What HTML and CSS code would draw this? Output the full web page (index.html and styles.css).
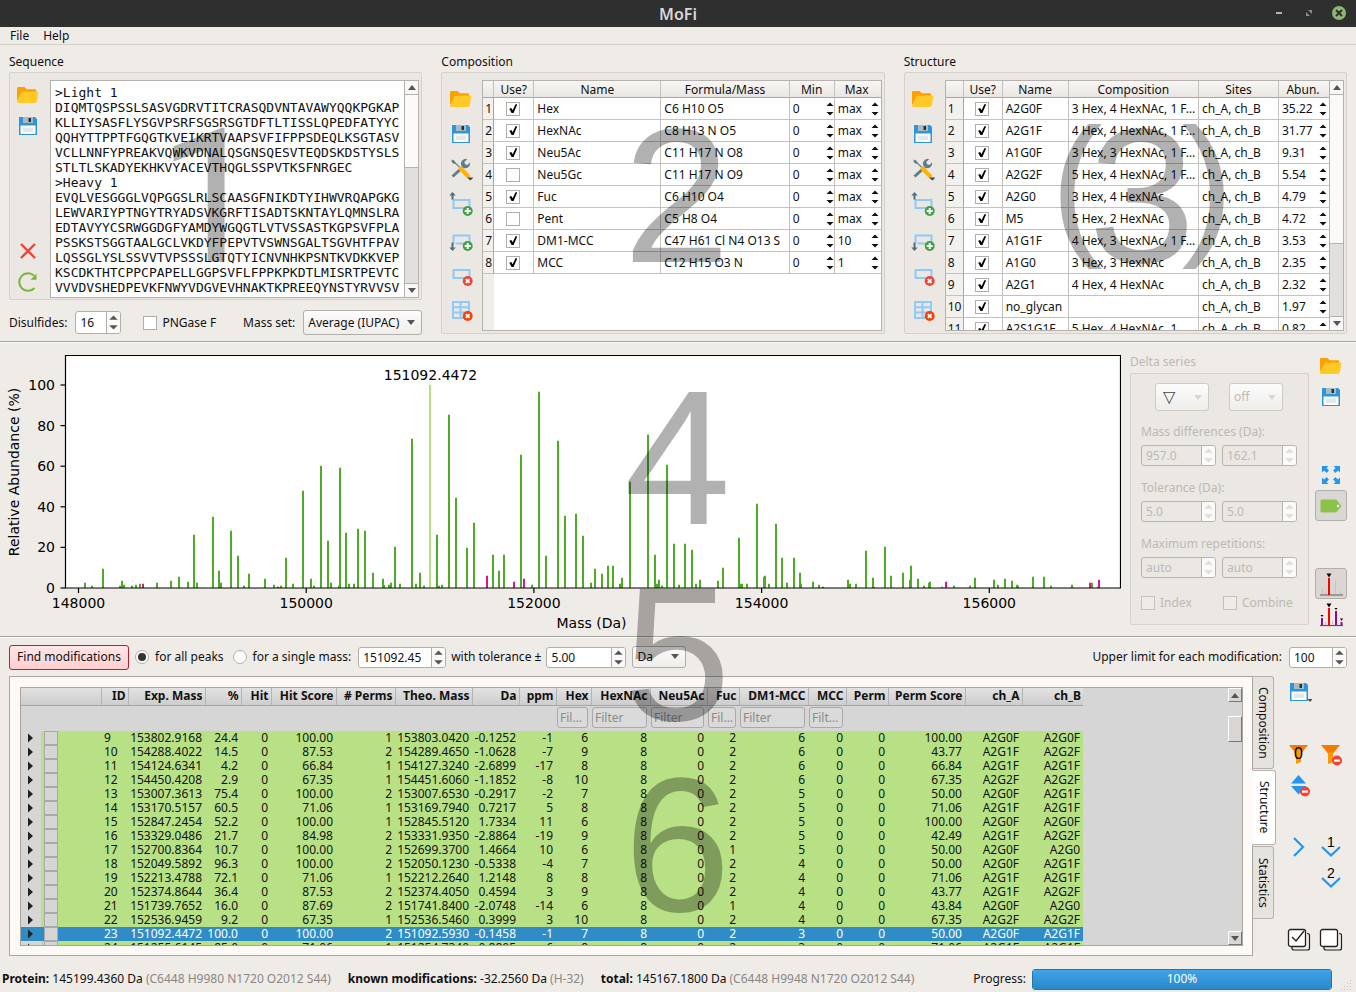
FILE: index.html
```html
<!DOCTYPE html>
<html lang="en">
<head>
<meta charset="utf-8">
<title>MoFi</title>
<link rel="stylesheet" href="styles.css">
</head>
<body>
<svg class="sprite" aria-hidden="true">
  <symbol id="i-folder" viewBox="0 0 24 24">
    <path fill="#ffa000" d="M1 5.2Q1 4 2.200 4H8.500l2.200 2.200H19q1.200 0 1.200 1.200V17H1z"/>
    <path fill="#ffca28" d="M6.500 8.800H21.300q1.300 0 1 1.200l-1.500 8.600q-.3 1.400-1.600 1.400H2.400Q.8 20 1 18.400L5 9.800q.4-1 1.500-1z"/>
  </symbol>
  <symbol id="i-save" viewBox="0 0 24 24">
    <path fill="#2e95dc" d="M3 3h16l2 2v16H3z"/>
    <path fill="#a9bac3" d="M7 3h10v6H7z"/><path fill="#263238" d="M12.500 4h2.500v4h-2.500z"/>
    <path fill="#fff" d="M4.500 11.500h15v8.500h-15z"/><path fill="#e3e8ea" d="M7 13.500h10v4.500H7z"/>
  </symbol>
  <symbol id="i-tools" viewBox="0 0 24 24">
    <path stroke="#607d8b" stroke-width="3" d="M3.500 19.500l10-9"/>
    <path fill="#607d8b" d="M12 8q-.6-4 2.600-5.600 2-1 3.600-.2l-2.800 2.600.6 2.400 2.600.7L21 5.200q.6 2.800-1.400 4.700-2.300 2-5.200 1.200z"/>
    <path stroke="#78909c" stroke-width="1.600" d="M3.500 3.500L13 12.500"/><path fill="#607d8b" d="M2.400 2.500l3 1.200 1.200 2.200-1.400 1.200L3 5.600z"/>
    <path stroke="#ffb300" stroke-width="4" stroke-linecap="round" d="M11.500 11.500l7.500 7.500"/>
    <path fill="#444" d="M18 20.500h6.500l-3.200 3z"/>
  </symbol>
  <symbol id="i-rowabove" viewBox="0 0 24 24">
    <path fill="none" stroke="#90caf9" stroke-width="2" d="M4.500 8h16v8h-16z"/>
    <path fill="#546e7a" d="M3.500 0l3.200 3.600H4.500v3.900h-2V3.600H.3z"/>
    <circle cx="18.700" cy="19" r="5" fill="#43a047"/><path stroke="#fff" stroke-width="2" d="M18.700 16v6M15.700 19h6"/>
  </symbol>
  <symbol id="i-rowbelow" viewBox="0 0 24 24">
    <path fill="none" stroke="#90caf9" stroke-width="2" d="M4.500 15.500v-8h16v8h-14"/>
    <path fill="#546e7a" d="M3.500 23l3.200-3.600H4.500v-4.900h-2v4.900H.3z"/>
    <circle cx="18.700" cy="18" r="5" fill="#43a047"/><path stroke="#fff" stroke-width="2" d="M18.700 15v6M15.700 18h6"/>
  </symbol>
  <symbol id="i-rowdel" viewBox="0 0 24 24">
    <path fill="none" stroke="#90caf9" stroke-width="2" d="M4.500 7h16v8h-16z"/>
    <circle cx="18.700" cy="18" r="5" fill="#f44336"/><path stroke="#fff" stroke-width="1.800" d="M16.800 16.100l3.800 3.800M20.600 16.100l-3.800 3.800"/>
  </symbol>
  <symbol id="i-cleartable" viewBox="0 0 24 24">
    <path fill="none" stroke="#90caf9" stroke-width="2" d="M4 4h16v16H4zM4 9.300h16M4 14.600h16M11.500 4v16"/>
    <circle cx="18.700" cy="18" r="5" fill="#ff3d00"/><path stroke="#fff" stroke-width="1.800" d="M16.800 16.100l3.800 3.800M20.600 16.100l-3.800 3.800"/>
  </symbol>
  <symbol id="i-cross" viewBox="0 0 24 24"><path stroke="#f44336" stroke-width="2.400" d="M5 4l14 14M19 4L5 18"/></symbol>
  <symbol id="i-redo" viewBox="0 0 24 24">
    <path fill="none" stroke="#7cb342" stroke-width="2" d="M18.500 17A8.800 8.800 0 1 1 18 4.600"/><path fill="#7cb342" d="M20.500 2.500v6.300h-6z"/>
  </symbol>
  <symbol id="i-expand" viewBox="0 0 24 24">
    <path fill="#2196f3" d="M3 3h6.500L7.400 5.100l2.500 2.500-2.300 2.300-2.500-2.500L3 9.500zM21 3v6.500l-2.100-2.100-2.500 2.500-2.300-2.300 2.500-2.500L14.500 3zM3 21v-6.500l2.100 2.100 2.500-2.500 2.300 2.300-2.500 2.500L9.500 21zM21 21h-6.500l2.100-2.100-2.500-2.500 2.300-2.300 2.500 2.500 2.100-2.100z"/>
  </symbol>
  <symbol id="i-tag" viewBox="0 0 24 24">
    <path fill="#8bc34a" d="M2.500 5.500H16q1.200 0 2 1l4.500 5.500-4.500 5.500q-.8 1-2 1H2.500q-1 0-1-1v-11q0-1 1-1z"/><circle cx="19" cy="12" r="1.200" fill="#fff"/>
  </symbol>
  <symbol id="i-peak" viewBox="0 0 24 24">
    <path stroke="#c8c4c4" stroke-width="1" d="M3.500 16v6M6.500 19v3M16.500 8v14M21.500 19v3"/><path stroke="#777" stroke-width="1.300" d="M1 23h23"/>
    <path stroke="#f00" stroke-width="2" d="M10 6v17"/><path d="M7.500 1.500h5L10 5.500z"/>
  </symbol>
  <symbol id="i-peaks" viewBox="0 0 24 24">
    <path stroke="#c8c4c4" stroke-width="1" d="M6.500 19v3M13.500 18v3"/><path stroke="#555" stroke-width="1.200" d="M1 22.500h23"/>
    <path stroke="#f00" stroke-width="2" d="M10 5v17"/><path stroke="#8e0d8e" stroke-width="2" d="M3 15v7M17 8v14M22.500 19v3"/>
    <path d="M7.500 .5h5L10 4.500zM1.500 12h3L3 14zM15.500 5h3L17 7zM21 15.500h3L22.500 18z"/>
  </symbol>
  <symbol id="i-funnel0" viewBox="0 0 24 24">
    <path fill="#f57c00" d="M2 3h19l-7 8.500H9z"/><path fill="#ff9800" d="M6 8h11l-3 4v8l-5 2v-10z"/>
    <text x="11.500" y="17" text-anchor="middle" font-family="Liberation Sans, sans-serif" font-size="16">0</text>
  </symbol>
  <symbol id="i-funnelx" viewBox="0 0 24 24">
    <path fill="#f57c00" d="M2 3h19l-7 8.500H9z"/><path fill="#ff9800" d="M9 10.500h5V20l-5 2z"/>
    <circle cx="18" cy="18.500" r="5" fill="#f44336"/><path fill="#fff" d="M15 17.500h6v2.200h-6z"/>
  </symbol>
  <symbol id="i-sortx" viewBox="0 0 24 24">
    <path fill="#2196f3" d="M11.500 2l7.500 8.500H4zM4 13h15l-7.500 8.500z"/>
    <circle cx="18" cy="18.500" r="5" fill="#f44336"/><path fill="#fff" d="M15 17.500h6v2.200h-6z"/>
  </symbol>
  <symbol id="i-right" viewBox="0 0 24 24"><path fill="none" stroke="#2196f3" stroke-width="2.200" d="M7 3l9 9-9 9"/></symbol>
  <symbol id="i-down1" viewBox="0 0 24 24">
    <path fill="none" stroke="#2196f3" stroke-width="2.200" d="M3 12l9 8.500 9-8.500"/>
    <text x="12" y="12" text-anchor="middle" font-family="Liberation Sans, sans-serif" font-size="14">1</text>
  </symbol>
  <symbol id="i-down2" viewBox="0 0 24 24">
    <path fill="none" stroke="#2196f3" stroke-width="2.200" d="M3 12l9 8.500 9-8.500"/>
    <text x="12" y="12" text-anchor="middle" font-family="Liberation Sans, sans-serif" font-size="14">2</text>
  </symbol>
  <symbol id="i-checkall" viewBox="0 0 24 24">
    <path fill="none" stroke="#222" stroke-width="1.200" d="M5 18.500v1.500q0 2 2 2h13.500q2 0 2-2V7.500q0-2-2.500-2"/><rect x="1.500" y="1.500" width="17" height="17" rx="2" fill="#fff" stroke="#222" stroke-width="1.300"/>
    <path fill="none" stroke="#222" stroke-width="1.400" d="M5 9l4 4 8-10"/>
  </symbol>
  <symbol id="i-checknone" viewBox="0 0 24 24">
    <path fill="none" stroke="#222" stroke-width="1.200" d="M5 18.500v1.500q0 2 2 2h13.500q2 0 2-2V7.500q0-2-2.500-2"/><rect x="1.500" y="1.500" width="17" height="17" rx="2" fill="#fff" stroke="#222" stroke-width="1.300"/>
  </symbol>
  <symbol id="i-arrows" viewBox="0 0 8 16"><path d="M0 5.500h8L4 1.500zM0 10.500h8l-4 4z"/></symbol>
  <symbol id="i-cellarrows" viewBox="0 0 8 16"><path d="M.5 5h7L4 1.500zM.5 11h7L4 14.500z"/></symbol>
  <symbol id="i-tri" viewBox="0 0 8 5"><path d="M0 0h8L4 5z"/></symbol>
</svg>

<div class="app">
  <header class="titlebar">
    <h1>MoFi</h1>
    <div class="winbuttons">
      <button aria-label="Minimize"><svg viewBox="0 0 16 16"><path fill="#b5b5b5" d="M5 7h6v2H5z"/></svg></button>
      <button aria-label="Restore"><svg viewBox="0 0 16 16"><path fill="#8d8d8d" d="M7 5h4v4zM5 7v4h4z"/></svg></button>
      <button aria-label="Close"><svg viewBox="0 0 16 16"><circle cx="8" cy="8" r="7" fill="#8fb573"/><path stroke="#2f2f2f" stroke-width="2" d="M5 5l6 6M11 5l-6 6"/></svg></button>
    </div>
  </header>
  <nav class="menubar"><button>File</button><button>Help</button></nav>

  <section class="top">
    <div class="panel">
      <h2>Sequence</h2>
      <div class="group seqgroup">
        <div class="tools split">
          <div><button aria-label="Open"><svg><use href="#i-folder"/></svg></button><button aria-label="Save"><svg><use href="#i-save"/></svg></button></div>
          <div><button aria-label="Clear"><svg><use href="#i-cross"/></svg></button><button aria-label="Update"><svg><use href="#i-redo"/></svg></button></div>
        </div>
        <div class="view">
          <textarea class="sequence" aria-label="Sequence" spellcheck="false">&gt;Light 1
DIQMTQSPSSLSASVGDRVTITCRASQDVNTAVAWYQQKPGKAP
KLLIYSASFLYSGVPSRFSGSRSGTDFTLTISSLQPEDFATYYC
QQHYTTPPTFGQGTKVEIKRTVAAPSVFIFPPSDEQLKSGTASV
VCLLNNFYPREAKVQWKVDNALQSGNSQESVTEQDSKDSTYSLS
STLTLSKADYEKHKVYACEVTHQGLSSPVTKSFNRGEC
&gt;Heavy 1
EVQLVESGGGLVQPGGSLRLSCAASGFNIKDTYIHWVRQAPGKG
LEWVARIYPTNGYTRYADSVKGRFTISADTSKNTAYLQMNSLRA
EDTAVYYCSRWGGDGFYAMDYWGQGTLVTVSSASTKGPSVFPLA
PSSKSTSGGTAALGCLVKDYFPEPVTVSWNSGALTSGVHTFPAV
LQSSGLYSLSSVVTVPSSSLGTQTYICNVNHKPSNTKVDKKVEP
KSCDKTHTCPPCPAPELLGGPSVFLFPPKPKDTLMISRTPEVTC
VVVDVSHEDPEVKFNWYVDGVEVHNAKTKPREEQYNSTYRVVSV</textarea>
          <div class="scrollbar"><i class="up"><svg><use href="#i-tri"/></svg></i><i class="thumb seq"></i><i class="down"><svg><use href="#i-tri"/></svg></i></div>
        </div>
      </div>
      <div class="row seqopts">
        <label for="disulf">Disulfides:</label>
        <span class="spin w45 first"><input id="disulf" value="16"><svg><use href="#i-arrows"/></svg></span>
        <label class="checklabel"><input type="checkbox"> PNGase F</label>
        <label for="massset" class="push">Mass set:</label>
        <span class="combo w119"><select id="massset"><option>Average (IUPAC)</option></select><svg><use href="#i-tri"/></svg></span>
      </div>
      <span class="mark one">1</span>
    </div>

    <div class="panel">
      <h2>Composition</h2>
      <div class="group">
        <div class="tools" data-tools></div>
        <div class="view">
          <table class="grid comp">
            <colgroup><col class="c12"><col class="c40"><col class="c127"><col><col class="c45"><col class="c46"></colgroup>
            <thead><tr><th></th><th>Use?</th><th>Name</th><th>Formula/Mass</th><th>Min</th><th>Max</th></tr></thead>
            <tbody id="comp-body"><tr class="filler"><th></th><td colspan="5"></td></tr></tbody>
          </table>
        </div>
      </div>
      <span class="mark two">2</span>
    </div>

    <div class="panel">
      <h2>Structure</h2>
      <div class="group">
        <div class="tools" data-tools></div>
        <div class="view">
          <table class="grid struct">
            <colgroup><col class="c19"><col class="c39"><col class="c66"><col><col class="c80"><col class="c50"></colgroup>
            <thead><tr><th></th><th>Use?</th><th>Name</th><th>Composition</th><th>Sites</th><th>Abun.</th></tr></thead>
            <tbody id="struct-body"></tbody>
          </table>
          <div class="scrollbar"><i class="up"><svg><use href="#i-tri"/></svg></i><i class="thumb struct"></i><i class="down"><svg><use href="#i-tri"/></svg></i></div>
        </div>
      </div>
      <span class="mark three"><span>(</span>3<span>)</span></span>
    </div>
  </section>

  <section class="middle">
    <div class="chart">
      <svg id="spectrum" viewBox="0 342 1121 293" role="img" aria-label="Mass spectrum">
        <rect x="65.500" y="354.500" width="1055" height="232.500" fill="#fff"/>
        <g id="peaks" stroke-width="2"></g>
        <path d="M65.500 354.500H1120.500V587H65.500z" fill="none" stroke="#000" stroke-width="1.200"/>
        <g id="ticks" stroke="#000" stroke-width="1.200"></g>
        <g id="ticklabels"></g>
        <text x="430.500" y="379" text-anchor="middle">151092.4472</text>
        <text x="591.500" y="627" text-anchor="middle">Mass (Da)</text>
        <text transform="translate(19 471) rotate(-90)" text-anchor="middle">Relative Abundance (%)</text>
      </svg>
    </div>
    <div class="delta">
      <h2>Delta series</h2>
      <fieldset class="deltabox" disabled>
        <div class="combos">
          <span class="combo"><select class="sym" aria-label="Marker"><option>▽</option></select><svg><use href="#i-tri"/></svg></span>
          <span class="combo"><select aria-label="Second series"><option>off</option></select><svg><use href="#i-tri"/></svg></span>
        </div>
        <p>Mass differences (Da):</p>
        <div class="pair"><span class="spin"><input aria-label="Difference 1" value="957.0"><svg><use href="#i-arrows"/></svg></span><span class="spin"><input aria-label="Difference 2" value="162.1"><svg><use href="#i-arrows"/></svg></span></div>
        <p>Tolerance (Da):</p>
        <div class="pair"><span class="spin"><input aria-label="Tolerance 1" value="5.0"><svg><use href="#i-arrows"/></svg></span><span class="spin"><input aria-label="Tolerance 2" value="5.0"><svg><use href="#i-arrows"/></svg></span></div>
        <p>Maximum repetitions:</p>
        <div class="pair"><span class="spin"><input aria-label="Repetitions 1" value="auto"><svg><use href="#i-arrows"/></svg></span><span class="spin"><input aria-label="Repetitions 2" value="auto"><svg><use href="#i-arrows"/></svg></span></div>
        <div class="pair checks"><label class="checklabel"><input type="checkbox"> Index</label><label class="checklabel"><input type="checkbox"> Combine</label></div>
      </fieldset>
    </div>
    <div class="charttools">
      <div><button aria-label="Open peaks"><svg><use href="#i-folder"/></svg></button><button aria-label="Save spectrum"><svg><use href="#i-save"/></svg></button></div>
      <div><button aria-label="Reset zoom"><svg><use href="#i-expand"/></svg></button><button class="on" aria-label="Labels"><svg><use href="#i-tag"/></svg></button></div>
      <div><button class="on" aria-label="Select single peak"><svg><use href="#i-peak"/></svg></button><button aria-label="Delta series"><svg><use href="#i-peaks"/></svg></button></div>
    </div>
    <span class="mark four">4</span>
  </section>

  <section class="bottom">
    <div class="row search">
      <button class="find">Find modifications</button>
      <label class="radio"><input type="radio" name="scope" checked> for all peaks</label>
      <label class="radio second"><input type="radio" name="scope"> for a single mass:</label>
      <span class="spin w88"><input aria-label="Single mass" value="151092.45"><svg><use href="#i-arrows"/></svg></span>
      <label for="tol">with tolerance ±</label>
      <span class="spin w80"><input id="tol" value="5.00"><svg><use href="#i-arrows"/></svg></span>
      <span class="combo w54"><select aria-label="Unit"><option>Da</option></select><svg><use href="#i-tri"/></svg></span>
      <label for="limit" class="push">Upper limit for each modification:</label>
      <span class="spin w58"><input id="limit" value="100"><svg><use href="#i-arrows"/></svg></span>
    </div>
    <div class="results">
      <div class="pane">
        <div class="tree">
          <table class="hits">
            <colgroup id="hit-cols"></colgroup>
            <thead id="hit-head"></thead>
            <tbody id="hit-body"></tbody>
          </table>
          <div class="oldscroll"><i class="up"><svg><use href="#i-tri"/></svg></i><i class="thumb"></i><i class="down"><svg><use href="#i-tri"/></svg></i></div>
        </div>
      </div>
      <div class="tabs" role="tablist">
        <button role="tab" class="t1">Composition</button>
        <button role="tab" class="t2" aria-selected="true">Structure</button>
        <button role="tab" class="t3">Statistics</button>
      </div>
      <div class="resulttools">
        <button class="r1 menu" aria-label="Save results"><svg><use href="#i-save"/></svg><svg class="drop"><use href="#i-tri"/></svg></button>
        <button class="r3" aria-label="Reset filters"><svg><use href="#i-funnel0"/></svg></button>
        <button class="r3" aria-label="Clear filters"><svg><use href="#i-funnelx"/></svg></button>
        <button class="r4" aria-label="Restore sorting"><svg><use href="#i-sortx"/></svg></button>
        <button class="r6" aria-label="Collapse"><svg><use href="#i-right"/></svg></button>
        <button class="r6" aria-label="Expand one level"><svg><use href="#i-down1"/></svg></button>
        <button class="r7 c2" aria-label="Expand two levels"><svg><use href="#i-down2"/></svg></button>
        <button class="r9" aria-label="Check all"><svg><use href="#i-checkall"/></svg></button>
        <button class="r9" aria-label="Uncheck all"><svg><use href="#i-checknone"/></svg></button>
      </div>
    </div>
    <span class="mark five">5</span>
    <span class="mark six">6</span>
  </section>

  <footer class="status">
    <span class="s1"><b>Protein:</b> 145199.4360 Da <em>(C6448 H9980 N1720 O2012 S44)</em></span>
    <span class="s2"><b>known modifications:</b> -32.2560 Da <em>(H-32)</em></span>
    <span><b>total:</b> 145167.1800 Da <em>(C6448 H9948 N1720 O2012 S44)</em></span>
    <label for="prog" class="push">Progress:</label>
    <span class="progress"><progress id="prog" value="100" max="100"></progress><span>100%</span></span>
    <svg class="grip" viewBox="0 0 12 12"><path fill="#c9c5c1" d="M9 0h1v1H9zM6 3h1v1H6zM9 3h1v1H9zM3 6h1v1H3zM6 6h1v1H6zM9 6h1v1H9zM0 9h1v1H0zM3 9h1v1H3zM6 9h1v1H6zM9 9h1v1H9z"/></svg>
  </footer>
</div>
<script src="app.js"></script>
</body>
</html>
```
FILE: styles.css
```css
* { box-sizing: border-box; }
body {
  margin: 0;
  background: #efebe7;
  color: #111;
  font: 12px/16px "Noto Sans", sans-serif;
}
button, input, select, textarea { font: inherit; color: inherit; margin: 0; }
button { border: 0; padding: 0; background: none; }
h1, h2, p { margin: 0; font-weight: normal; font-size: 12px; }
.sprite { display: none; }
.app { display: flex; flex-direction: column; height: 100vh; min-height: 900px; overflow: hidden; }

.titlebar { flex: none; position: relative; height: 27px; background: #2f2f2f; display: flex; align-items: center; justify-content: center; }
.titlebar h1 { font-size: 16px; line-height: 24px; font-weight: 600; color: #d8d8d8; }
.winbuttons { position: absolute; right: 9px; top: 5px; display: flex; gap: 14px; }
.winbuttons button, .winbuttons svg { display: block; width: 16px; height: 16px; }
.menubar { flex: none; display: flex; gap: 14px; height: 18px; padding-left: 10px; border-bottom: 1px solid #d3cfcb; }

.top { flex: none; display: grid; grid-template-columns: 413fr 443fr 443fr; gap: 19px; padding: 9px 9px 6px; border-bottom: 1px solid #a3a29f; }
.panel { position: relative; }
.panel h2 { height: 18px; }
.group { display: flex; height: 262px; border: 1px solid #d5d1cd; border-radius: 2px; background: #ebe7e2; padding: 7px 2px 2px 4px; gap: 7px; }
.seqgroup { height: 228px; padding-bottom: 1px; padding-left: 3px; gap: 8px; }
.tools { width: 29px; padding: 7px 0 9px; display: flex; flex-direction: column; justify-content: space-between; align-items: center; flex: none; }
.tools button, .tools svg { display: block; width: 24px; height: 24px; }
.tools.split { padding: 3px 0; }
.tools.split button + button { margin-top: 7px; }
.view { flex: 1; min-width: 0; display: flex; border: 1px solid #b5b2ae; background: #fff; overflow: hidden; }
.sequence { flex: 1; min-width: 0; border: 0; padding: 4px; resize: none; overflow: hidden; white-space: pre; background: #fff; font: 13px/15px "DejaVu Sans Mono", monospace; outline: 0; }

.scrollbar { flex: none; width: 14px; display: flex; flex-direction: column; border-left: 1px solid #b5b2ae; background: #e2e0dd; }
.scrollbar i, .oldscroll i { display: grid; place-items: center; }
.scrollbar .up, .scrollbar .down { height: 14px; background: #f8f7f5; }
.scrollbar .up, .scrollbar .thumb { border-bottom: 1px solid #b5b2ae; }
.scrollbar .down { margin-top: auto; border-top: 1px solid #b5b2ae; }
.scrollbar svg, .oldscroll svg { width: 8px; height: 5px; fill: #555; }
.up svg { transform: rotate(180deg); }
.thumb.seq { height: 73px; background: #fbfaf9; }
.thumb.struct { height: 149px; background: #fbfaf9; }

.row { display: flex; align-items: center; }
.push { margin-left: auto; }
.seqopts { margin-top: 10px; height: 25px; }
.seqopts .push { margin-right: 8px; }
.seqopts .first { margin: 0 22px 0 8px; }
.spin { display: flex; align-items: center; height: 21px; background: #fff; border: 1px solid #b2afab; border-radius: 3px; overflow: hidden; }
.spin input { flex: 1; min-width: 0; width: 0; height: 19px; border: 0; padding: 0 0 0 4px; background: none; outline: 0; }
.spin svg { flex: none; width: 14px; height: 21px; padding: 2px; border-left: 1px solid #b2afab; fill: #555; background: #fbfaf9; }
.w45 { width: 46px; height: 23px; }
.w88 { width: 88px; } .w80 { width: 80px; } .w58 { width: 58px; }
.combo { position: relative; display: block; height: 25px; }
.combo select { appearance: none; width: 100%; height: 100%; border: 1px solid #b2afab; border-radius: 3px; padding: 0 4px; background: linear-gradient(#fdfcfc, #f0edea); opacity: 1; }
.combo svg { position: absolute; right: 7px; top: 10px; width: 8px; height: 5px; fill: #555; }
.w119 { width: 119px; } .w54 { width: 54px; height: 22px; margin-left: 6px; }
.w54 svg { top: 8px; }
input[type=checkbox] { appearance: none; width: 14px; height: 14px; border: 1px solid #b2afab; background: #fff; display: inline-grid; place-items: center; flex: none; }
input[type=checkbox]:checked::before { content: ""; width: 8px; height: 9px; background: #000; clip-path: polygon(0 50%, 25% 42%, 42% 66%, 78% 0, 100% 0, 52% 100%, 30% 100%); }
.checklabel { display: flex; align-items: center; gap: 5px; }
input[type=radio] { appearance: none; width: 14px; height: 14px; border: 1px solid #b2afab; border-radius: 50%; background: #fff; display: inline-grid; place-items: center; flex: none; }
input[type=radio]:checked::before { content: ""; width: 8px; height: 8px; border-radius: 50%; background: #333; }

.grid { table-layout: fixed; border-collapse: separate; border-spacing: 0; width: 100%; align-self: flex-start; flex: 1; min-width: 0; }
.grid.comp { height: 100%; }
.grid col.c12 { width: 11px; } .c19 { width: 18px; }
.c39 { width: 39px; } .c40 { width: 40px; } .c45 { width: 45px; } .c46 { width: 46px; } .c50 { width: 50px; }
.c66 { width: 66px; } .c80 { width: 80px; } .c127 { width: 127px; }
.grid th, .grid td { height: 22px; padding: 0; border-right: 1px solid #c4c1be; border-bottom: 1px solid #c4c1be; font-weight: normal; white-space: nowrap; }
.grid thead th { height: 17px; line-height: 15px; background: linear-gradient(#f8f7f5, #e9e6e2); border-bottom-color: #aaa7a3; overflow: hidden; text-align: center; }
.grid tbody th { background: #f3f1ee; border-right-color: #aaa7a3; text-align: left; padding-left: 2px; }
.grid td { padding: 0 0 0 3px; overflow: hidden; }
.grid tr > :last-child { border-right: 0; padding-right: 2px; }
.grid td.use { text-align: center; padding: 0 1px 1px 0; }
.grid td.use input { vertical-align: middle; }
.grid .filler th, .grid .filler td { height: auto; border: 0; }
.grid .filler th { background: #f0edea; }
.cellspin { display: flex; align-items: center; }
.cellspin input { flex: 1; width: 0; min-width: 0; border: 0; padding: 0; background: none; outline: 0; height: 20px; }
.cellspin svg { flex: none; width: 8px; height: 16px; fill: #111; }

.middle { flex: none; position: relative; display: flex; padding-right: 9px; border-top: 1px solid #fff; border-bottom: 1px solid #a3a29f; height: 295px; }
.chart { flex: 1; min-width: 0; }
.chart svg { display: block; width: 100%; height: 100%; font: 14px "DejaVu Sans", sans-serif; }
.delta { width: 179px; margin: 11px 6px 0 9px; color: #bdb9b5; }
.delta h2 { height: 19px; }
.deltabox { margin: 0; border: 1px solid #d5d1cd; border-radius: 2px; background: #ebe7e2; height: 252px; padding: 9px 11px 0 10px; min-width: 0; }
.combos { display: flex; gap: 20px; padding-left: 14px; }
.combos .combo { width: 54px; height: 28px; }
.combos .combo svg { top: 12px; fill: #d8d5d2; }
.deltabox select { border-color: #cecac6; background: linear-gradient(#fdfcfc, #f0edea); color: #bdb9b5; }
.deltabox select.sym { color: #444; font-family: "DejaVu Sans", sans-serif; font-size: 16px; padding-left: 7px; }
.deltabox p { margin-top: 14px; line-height: 16px; }
.deltabox p:first-of-type { margin-top: 13px; }
.pair { display: grid; grid-template-columns: 75px 75px; gap: 6px; margin-top: 5px; }
.deltabox .spin { background: #ebe7e2; border-color: #b8b4b0; }
.deltabox .spin svg { fill: #dfdcd9; border-color: #b8b4b0; }
.pair.checks { margin-top: 17px; gap: 7px; }
.deltabox input[type=checkbox] { background: #efebe7; border-color: #c4c0bc; }
.charttools { display: flex; flex-direction: column; justify-content: space-between; padding: 7px 0 6px; }
.charttools button { display: grid; place-items: center; width: 32px; height: 31px; border-radius: 3px; }
.charttools svg, .resulttools svg { width: 24px; height: 24px; display: block; }
.charttools .on { background: #dad6d4; border: 1px solid #b2afab; }

.bottom { flex: 1; min-height: 0; position: relative; display: flex; flex-direction: column; border-top: 1px solid #fff; padding: 6px 9px 0; }
.search { flex: none; height: 26px; margin-bottom: 6px; }
.find { width: 120px; height: 25px; background: linear-gradient(#ffe6e6, #ffcfcf); border: 1px solid #b9202a; border-radius: 3px; margin-right: 6px; }
.radio { display: flex; align-items: center; gap: 6px; }
.search .radio.second { margin: 0 7px 0 9px; }
.search label[for=tol] { margin: 0 5px; }
.search label[for=limit] { margin-right: 7px; }
.results { flex: 1; min-height: 0; display: flex; }
.pane { flex: 1; min-width: 0; border: 1px solid #a9a6a2; background: #fcf9f6; padding: 10px; padding-right: 9px; padding-bottom: 9px; }
.tree { height: 100%; display: flex; justify-content: space-between; border: 1px solid #a9a6a2; background: #d6d6d6; overflow: hidden; }
.hits { table-layout: fixed; border-collapse: collapse; width: 1062px; flex: none; align-self: flex-start; }
.hits th, .hits td { padding: 0 3px 0 0; text-align: right; white-space: nowrap; overflow: visible; }
.hits th { height: 17px; line-height: 15px; font-weight: 700; padding: 0 2px 1px 0; background: linear-gradient(#e2e2e2, #cdcdcd); border-right: 1px solid #b4b4b4; border-bottom: 1px solid #a6a6a6; }
.hits thead tr:first-child th:last-child { border-right: 0; }
.hits .filters td { height: 26px; padding: 0 3px 2px 1px; }
.hits .filters input { display: block; width: 100%; height: 21px; border: 1px solid #a9a9a9; border-radius: 3px; padding: 0 2px; background: #dadada; text-overflow: ellipsis; }
.hits .filters input::placeholder { color: #8b8b8b; opacity: 1; }
.hits tbody tr { background: #b8e186; }
.hits tbody td { height: 14px; line-height: 14px; }
.hits tbody td.id { text-align: left; padding-left: 3px; }
.hits tbody td.lead { text-align: left; }
.lead div { display: flex; align-items: center; height: 14px; }
.lead .exp { width: 20px; height: 14px; background: #d6d6d6; flex: none; }
.lead input[type=checkbox] { margin-left: 3px; background: #d6d6d6; border-color: #a9a9a9; }
.hits tbody tr.sel { background: #308cc6; color: #fff; }
.sel .lead .exp { background: none; }
.oldscroll { width: 14px; display: flex; flex-direction: column; flex: none; }
.oldscroll i { height: 14px; background: #d9d6d3; border: 1px solid; border-color: #fff #777 #777 #fff; }
.oldscroll .thumb { height: 26px; margin-top: 14px; }
.oldscroll .down { margin-top: auto; }
.tabs { width: 24px; flex: none; display: flex; flex-direction: column; align-items: flex-start; margin-left: -1px; }
.tabs button { writing-mode: vertical-rl; width: 22px; border: 1px solid #b5b2ae; border-left: 1px solid #a9a6a2; border-radius: 0 3px 3px 0; background: #e6e2de; margin-bottom: 1px; }
.tabs .t1 { height: 93px; } .tabs .t2 { height: 75px; } .tabs .t3 { height: 73px; }
.tabs .t2 { width: 24px; background: #fff; border-left-color: #fcf9f6; }
.resulttools { flex: none; width: 64px; margin-left: 7px; display: grid; grid-template-columns: 32px 32px; grid-auto-rows: 31px; align-content: start; }
.resulttools button { position: relative; display: grid; place-items: center; }
.resulttools .drop { position: absolute; right: 2px; bottom: 5px; width: 6px; height: 3px; fill: #444; }
.r1 { grid-row: 1; } .r3 { grid-row: 3; } .r4 { grid-row: 4; } .r6 { grid-row: 6; } .r7 { grid-row: 7; } .r9 { grid-row: 9; }
.c2 { grid-column: 2; }

.status { flex: none; height: 36px; padding: 10px 3px 0 2px; display: flex; align-items: center; }
.status em { font-style: normal; color: #8a8784; }
.status b { font-weight: 700; }
.s1, .s2 { margin-right: 17px; }
.status label { margin-right: 6px; }
.progress { position: relative; display: block; width: 300px; height: 21px; color: #fff; }
.progress progress { appearance: none; display: block; width: 100%; height: 100%; border: 1px solid #2874a8; border-radius: 3px; overflow: hidden; }
.progress progress::-webkit-progress-bar { background: #fff; }
.progress progress::-webkit-progress-value { background: linear-gradient(#3ea4e8, #2a88c8); }
.progress span { position: absolute; inset: 0; display: grid; place-items: center; }
.grip { width: 12px; height: 12px; margin-left: 9px; align-self: flex-end; }

.mark { position: absolute; z-index: 5; pointer-events: none; color: #000; opacity: .3; font: 192px/192px "Liberation Sans", sans-serif; }
.one { left: 149px; top: 49px; font-family: Roboto, sans-serif; font-size: 187px; }
.two { left: 182px; top: 46px; }
.three { left: 161px; top: 46px; display: flex; align-items: flex-start; }
.three span { font-size: 156px; line-height: 166px; margin: 0 -14px; }
.four { left: 624px; top: 19px; }
.five { left: 624px; top: -80px; }
.six { left: 624px; top: 111px; }
```
FILE: app.js
```js
const use = (id) => `<svg><use href="#${id}"/></svg>`;

const toolNames = [
  ["i-folder", "Open"], ["i-save", "Save"], ["i-tools", "Defaults"],
  ["i-rowabove", "Insert row above"], ["i-rowbelow", "Insert row below"],
  ["i-rowdel", "Delete row"], ["i-cleartable", "Clear table"],
];
document.querySelectorAll("[data-tools]").forEach((el) => {
  el.innerHTML = toolNames.map(([id, name]) => `<button aria-label="${name}">${use(id)}</button>`).join("");
});

const spinCell = (v, label) => `<td><span class="cellspin"><input aria-label="${label}" value="${v}">${use("i-cellarrows")}</span></td>`;
const useCell = (on, name) => `<td class="use"><input type="checkbox" aria-label="Use ${name}"${on ? " checked" : ""}></td>`;

const composition = [
  [1, "Hex", "C6 H10 O5", "max"], [1, "HexNAc", "C8 H13 N O5", "max"],
  [1, "Neu5Ac", "C11 H17 N O8", "max"], [0, "Neu5Gc", "C11 H17 N O9", "max"],
  [1, "Fuc", "C6 H10 O4", "max"], [0, "Pent", "C5 H8 O4", "max"],
  [1, "DM1-MCC", "C47 H61 Cl N4 O13 S", "10"], [1, "MCC", "C12 H15 O3 N", "1"],
];
document.getElementById("comp-body").insertAdjacentHTML("afterbegin", composition.map(([on, name, formula, max], i) =>
  `<tr><th>${i + 1}</th>${useCell(on, name)}<td>${name}</td><td>${formula}</td>${spinCell(0, "Min")}${spinCell(max, "Max")}</tr>`).join(""));

const structures = [
  ["A2G0F", "3 Hex, 4 HexNAc, 1 F…", "35.22"], ["A2G1F", "4 Hex, 4 HexNAc, 1 F…", "31.77"],
  ["A1G0F", "3 Hex, 3 HexNAc, 1 F…", "9.31"], ["A2G2F", "5 Hex, 4 HexNAc, 1 F…", "5.54"],
  ["A2G0", "3 Hex, 4 HexNAc", "4.79"], ["M5", "5 Hex, 2 HexNAc", "4.72"],
  ["A1G1F", "4 Hex, 3 HexNAc, 1 F…", "3.53"], ["A1G0", "3 Hex, 3 HexNAc", "2.35"],
  ["A2G1", "4 Hex, 4 HexNAc", "2.32"], ["no_glycan", "", "1.97"], ["A2S1G1F", "5 Hex, 4 HexNAc, 1", "0.82"],
];
document.getElementById("struct-body").innerHTML = structures.map(([name, comp, ab], i) =>
  `<tr><th>${i + 1}</th>${useCell(1, name)}<td>${name}</td><td>${comp}</td><td>ch_A, ch_B</td>${spinCell(ab, "Abundance")}</tr>`).join("");

// Peaks as [x, height] in thirds of a chart unit above the base line.
const found = "255:16 276:7 309:58 360:7 366:22 372:10 396:7 408:10 420:13 471:16 513:22 537:34 564:19 582:160 591:16 639:214 657:52 663:16 693:172 714:97 732:7 747:43 795:28 822:10 843:7 858:91 879:13 909:292 933:28 942:7 963:367 984:142 993:16 1017:7 1020:361 1038:166 1047:13 1062:13 1074:178 1095:172 1119:46 1149:28 1152:10 1167:10 1173:16 1185:124 1200:13 1236:448 1248:13 1260:46 1272:7 1311:160 1317:7 1326:10 1347:520 1368:271 1401:121 1422:196 1479:100 1497:52 1512:100 1563:400 1596:10 1617:589 1638:97 1674:442 1695:217 1728:223 1749:157 1773:16 1785:58 1806:43 1824:67 1839:67 1860:13 1866:31 1890:319 1944:460 1965:100 1971:13 1977:25 1986:7 2001:370 2022:133 2037:10 2055:133 2076:115 2088:13 2100:25 2154:22 2169:61 2217:151 2223:13 2227:13 2241:13 2271:253 2292:34 2295:37 2307:13 2328:193 2346:91 2361:16 2382:91 2400:46 2403:13 2439:19 2457:10 2544:25 2550:13 2568:13 2598:112 2619:31 2622:4 2655:124 2673:37 2709:46 2730:25 2733:67 2754:28 2772:7 2787:16 2790:19 2826:4 2862:7 2910:7 2925:31 2982:25 2994:10 3015:28 3036:22 3051:10 3054:7 3099:34 3132:34 3153:7 3216:10 3276:16 3294:4";
const unexplained = "429:13 834:4 1461:37 1542:19 1572:28 2469:4 2838:19 3270:16 3297:25";
const bars = (list, color) => {
  const d = list.split(" ").map((p) => p.split(":")).map(([x, h]) => `M${Math.round(x / 3)} 587v${-(h / 3).toFixed(1)}`).join("");
  return `<path d="${d}" stroke="${color}"/>`;
};
document.getElementById("peaks").innerHTML = bars(found, "#4dac26") + bars(unexplained, "#d01c8b") + bars("1290:610", "#b8e186");

const xTicks = [148000, 150000, 152000, 154000, 156000].map((m) => [78.5 + (m - 148000) * 0.11385, m]);
const yTicks = [0, 20, 40, 60, 80, 100].map((v) => [587 - v * 2.03, v]);
document.getElementById("ticks").innerHTML =
  xTicks.map(([x]) => `<path d="M${x} 587v5"/>`).join("") + yTicks.map(([y]) => `<path d="M60.500 ${y}h5"/>`).join("");
document.getElementById("ticklabels").innerHTML =
  xTicks.map(([x, t]) => `<text x="${x}" y="607" text-anchor="middle">${t}</text>`).join("") +
  yTicks.map(([y, t]) => `<text x="55" y="${y + 5}" text-anchor="end">${t}</text>`).join("");

const columns = [["", 80], ["ID", 27], ["Exp. Mass", 77], ["%", 36], ["Hit", 30], ["Hit Score", 65], ["# Perms", 59],
  ["Theo. Mass", 77], ["Da", 47], ["ppm", 37], ["Hex", 35, 1], ["HexNAc", 59, 1], ["Neu5Ac", 57, 1], ["Fuc", 32, 1],
  ["DM1-MCC", 69, 1], ["MCC", 38, 1], ["Perm", 42], ["Perm Score", 77], ["ch_A", 57], ["ch_B", 61]];
document.getElementById("hit-cols").innerHTML = columns.map(([, w]) => `<col style="width:${w}px">`).join("");
document.getElementById("hit-head").innerHTML =
  `<tr>${columns.map(([n]) => `<th>${n}</th>`).join("")}</tr>` +
  `<tr class="filters">${columns.map(([n, , f]) => `<td>${f ? `<input placeholder="Filter" aria-label="Filter ${n}">` : ""}</td>`).join("")}</tr>`;

const hits = `9 153802.9168 24.4 0 100.00 1 153803.0420 -0.1252 -1 6 8 0 2 6 0 0 100.00 A2G0F A2G0F
10 154288.4022 14.5 0 87.53 2 154289.4650 -1.0628 -7 9 8 0 2 6 0 0 43.77 A2G1F A2G2F
11 154124.6341 4.2 0 66.84 1 154127.3240 -2.6899 -17 8 8 0 2 6 0 0 66.84 A2G1F A2G1F
12 154450.4208 2.9 0 67.35 1 154451.6060 -1.1852 -8 10 8 0 2 6 0 0 67.35 A2G2F A2G2F
13 153007.3613 75.4 0 100.00 2 153007.6530 -0.2917 -2 7 8 0 2 5 0 0 50.00 A2G0F A2G1F
14 153170.5157 60.5 0 71.06 1 153169.7940 0.7217 5 8 8 0 2 5 0 0 71.06 A2G1F A2G1F
15 152847.2454 52.2 0 100.00 1 152845.5120 1.7334 11 6 8 0 2 5 0 0 100.00 A2G0F A2G0F
16 153329.0486 21.7 0 84.98 2 153331.9350 -2.8864 -19 9 8 0 2 5 0 0 42.49 A2G1F A2G2F
17 152700.8364 10.7 0 100.00 2 152699.3700 1.4664 10 6 8 0 1 5 0 0 50.00 A2G0F A2G0
18 152049.5892 96.3 0 100.00 2 152050.1230 -0.5338 -4 7 8 0 2 4 0 0 50.00 A2G0F A2G1F
19 152213.4788 72.1 0 71.06 1 152212.2640 1.2148 8 8 8 0 2 4 0 0 71.06 A2G1F A2G1F
20 152374.8644 36.4 0 87.53 2 152374.4050 0.4594 3 9 8 0 2 4 0 0 43.77 A2G1F A2G2F
21 151739.7652 16.0 0 87.69 2 151741.8400 -2.0748 -14 6 8 0 1 4 0 0 43.84 A2G0F A2G0
22 152536.9459 9.2 0 67.35 1 152536.5460 0.3999 3 10 8 0 2 4 0 0 67.35 A2G2F A2G2F
23 151092.4472 100.0 0 100.00 2 151092.5930 -0.1458 -1 7 8 0 2 3 0 0 50.00 A2G0F A2G1F
24 151255.6145 85.0 0 71.06 1 151254.7340 0.8805 6 8 8 0 2 3 0 0 71.06 A2G1F A2G1F`;
document.getElementById("hit-body").innerHTML = hits.split("\n").map((line) => {
  const v = line.split(" ");
  return `<tr${v[0] === "23" ? ' class="sel"' : ""}><td class="lead"><div><svg class="exp" viewBox="0 0 20 14"><path fill="#222" d="M7 2.500l5 4.500-5 4.500z"/></svg><input type="checkbox" aria-label="Check hit ${v[0]}"></div></td>` +
    v.map((t, i) => `<td${i === 0 ? ' class="id"' : ""}>${t}</td>`).join("") + "</tr>";
}).join("");
```
